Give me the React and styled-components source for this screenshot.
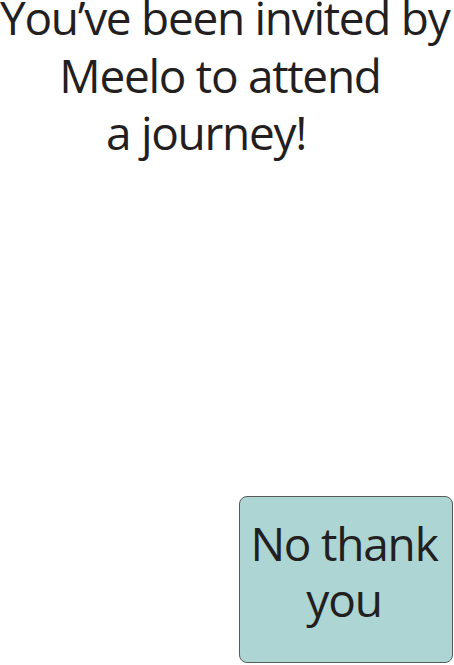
import styled, { createGlobalStyle } from "styled-components"

const GlobalStyle = createGlobalStyle`
  html, body {
    margin: 0;
    padding: 0;
    background: #ffffff;
  }
`

const Page = styled.div`
  display: flex;
  flex-direction: column;
  justify-content: space-between;
  height: 665px;
  overflow: hidden;
  font-family: "Open Sans", "Noto Sans", sans-serif;
  color: #231f20;
`

const Title = styled.h1`
  margin: -11px 0 0;
  font-size: 46px;
  font-weight: 400;
  line-height: 57.5px;
  letter-spacing: -1.3px;
  text-align: center;
`

const Line = styled.span`
  display: block;
  padding-right: ${(p) => p.$shift || 0}px;
  white-space: nowrap;
`

const DeclineBtn = styled.button`
  align-self: flex-end;
  box-sizing: border-box;
  width: 214px;
  height: 167px;
  margin: 0 1px 2px 0;
  padding: 0 4px 18px 0;
  background: #acd5d3;
  border: 1px solid #5a5a5a;
  border-radius: 8px;
  font-family: inherit;
  font-size: 46px;
  line-height: 56px;
  letter-spacing: -1.2px;
  color: #231f20;
  cursor: pointer;
`

const App = () => {
  return (
    <>
      <GlobalStyle />
      <Page>
        <Title>
          <Line $shift={5}>You’ve been invited by</Line>
          <Line $shift={14}>Meelo to attend</Line>
          <Line $shift={42}>a journey!</Line>
        </Title>
        <DeclineBtn>No thank<br />you</DeclineBtn>
      </Page>
    </>
  )
}

export default App
